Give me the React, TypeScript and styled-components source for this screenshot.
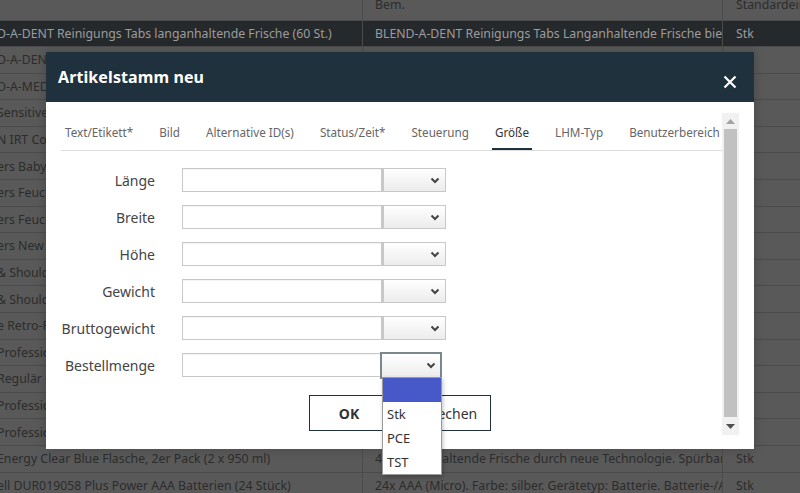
import React from "react";
import styled, { createGlobalStyle } from "styled-components";

const GlobalStyle = createGlobalStyle`
  html, body {
    margin: 0;
    padding: 0;
  }
  body {
    width: 800px;
    height: 493px;
    overflow: hidden;
    background: #595959;
    font-family: "Noto Sans", "Open Sans", sans-serif;
  }
`;

const Page = styled.div`
  position: relative;
  width: 800px;
  height: 493px;
  overflow: hidden;
  background: #595959;
`;

/* list of articles behind the modal, scrolled a little to the right */
const Table = styled.div`
  margin-left: -3px;
  display: flex;
  flex-direction: column;
`;

const Row = styled.div<{ $h: number; $selected?: boolean; $head?: boolean }>`
  display: grid;
  grid-template-columns: 366px 360px 1fr;
  height: ${(p) => p.$h}px;
  box-sizing: border-box;
  border-bottom: 1px solid #4b4b4b;
  background: ${(p) => (p.$selected ? "#25292c" : "transparent")};
  color: ${(p) => (p.$selected ? "#9c9c9c" : "#2c2c2c")};
  font-size: 12.3px;
  align-items: ${(p) => (p.$head ? "start" : "stretch")};
`;

const Cell = styled.div<{ $pad: number; $last?: boolean; $shift?: number }>`
  display: flex;
  align-items: center;
  height: 100%;
  min-width: 0;
  padding-left: ${(p) => p.$pad}px;
  border-right: ${(p) => (p.$last ? "none" : "1px solid #4b4b4b")};
  white-space: nowrap;
  overflow: hidden;
  box-sizing: border-box;
  & > span {
    margin-top: ${(p) => p.$shift ?? 0}px;
  }
`;

/* modal */
const Dialog = styled.div`
  position: absolute;
  left: 46px;
  top: 52px;
  width: 708px;
  height: 397px;
  background: #fff;
  display: flex;
  flex-direction: column;
  box-shadow: 0 0 10px rgba(0, 0, 0, 0.2);
`;

const DialogHeader = styled.div`
  height: 50px;
  flex-shrink: 0;
  background: #1f313d;
  display: flex;
  align-items: center;
  justify-content: space-between;
  padding: 0 17px 0 12px;
`;

const Title = styled.h2`
  margin: 0;
  color: #fff;
  font-size: 16px;
  font-weight: 700;
  letter-spacing: 0.1px;
`;

const CloseButton = styled.button`
  border: none;
  background: none;
  padding: 0;
  margin-top: 10px;
  width: 14px;
  height: 14px;
  display: flex;
  cursor: pointer;
`;

const DialogBody = styled.div`
  flex: 1;
  display: flex;
  padding: 11px 15px 14px 15px;
`;

const Content = styled.div`
  flex: 1;
  min-width: 0;
  display: flex;
  flex-direction: column;
`;

const Tabs = styled.div`
  display: flex;
  height: 37px;
  border-bottom: 1px solid #dcdcdc;
  padding-left: 1px;
  overflow: hidden;
`;

const Tab = styled.div<{ $active?: boolean }>`
  display: flex;
  align-items: center;
  flex-shrink: 0;
  white-space: nowrap;
  padding: 0 3px;
  margin-right: 20px;
  font-size: 11.7px;
  color: ${(p) => (p.$active ? "#333" : "#666")};
  box-shadow: ${(p) => (p.$active ? "inset 0 -2px 0 #1f313d" : "none")};
`;

const Form = styled.div`
  display: flex;
  flex-direction: column;
  gap: 13px;
  margin-top: 17px;
`;

const FormRow = styled.div`
  display: flex;
  align-items: center;
  height: 24px;
`;

const Label = styled.label`
  width: 94px;
  margin-right: 27px;
  text-align: right;
  font-size: 14px;
  color: #444;
`;

const TextInput = styled.div`
  width: 200px;
  height: 24px;
  box-sizing: border-box;
  border: 1px solid #c8c8c8;
  box-shadow: inset 0 1px 1px rgba(0, 0, 0, 0.05);
  background: #fff;
`;

const Select = styled.div<{ $open?: boolean }>`
  position: relative;
  box-sizing: border-box;
  width: ${(p) => (p.$open ? 62 : 64)}px;
  height: ${(p) => (p.$open ? 27 : 24)}px;
  margin-left: ${(p) => (p.$open ? -2 : 0)}px;
  margin-top: ${(p) => (p.$open ? 1 : 0)}px;
  border: ${(p) => (p.$open ? "2px solid #7b868d" : "1px solid #c8c8c8")};
  border-left-width: 2px;
  background: linear-gradient(#fff, #ececec);
  display: flex;
  align-items: center;
  justify-content: flex-end;
  padding-right: ${(p) => (p.$open ? 4 : 5)}px;
`;

const OptionList = styled.ul`
  position: absolute;
  top: 100%;
  left: 0;
  width: 60px;
  box-sizing: border-box;
  margin: 0;
  padding: 0;
  list-style: none;
  background: #fff;
  border: 1px solid #9a9a9a;
  box-shadow: 1px 2px 4px rgba(0, 0, 0, 0.25);
  z-index: 2;
`;

const Option = styled.li<{ $highlight?: boolean }>`
  height: 24px;
  line-height: 24px;
  padding-left: 4px;
  font-size: 13px;
  color: #333;
  background: ${(p) => (p.$highlight ? "#4759c8" : "#fff")};
`;

const Buttons = styled.div`
  display: flex;
  gap: 3px;
  margin-top: 18px;
  margin-left: 248px;
`;

const Button = styled.button<{ $primary?: boolean; $w: number }>`
  width: ${(p) => p.$w}px;
  height: 36px;
  border: 1px solid #1f313d;
  background: #fff;
  font-family: inherit;
  font-size: 14px;
  font-weight: ${(p) => (p.$primary ? 700 : 400)};
  color: #333;
`;

const Scrollbar = styled.div`
  width: 17px;
  background: #f1f1f1;
  display: flex;
  flex-direction: column;
  align-items: center;
`;

const ArrowBox = styled.div<{ $h: number }>`
  height: ${(p) => p.$h}px;
  display: flex;
  align-items: center;
  justify-content: center;
`;

const Thumb = styled.div`
  width: 13px;
  flex: 1;
  background: #c1c1c1;
`;

const Chevron = () => (
  <svg width="10" height="7" viewBox="0 0 10 7">
    <path d="M1.5 1.5 L5 5 L8.5 1.5" fill="none" stroke="#444" strokeWidth="2" />
  </svg>
);

const rows: [string, string][] = [
  ["D-A-DENT Reinigungs Tabs langanhaltende Frische (60 St.)", "BLEND-A-DENT Reinigungs Tabs Langanhaltende Frische bietet"],
  ["D-A-DENT Reinigungs Tabs extra frisch (54 St.)", "BLEND-A-DENT Reinigungs Tabs extra frisch"],
  ["D-A-MED Zahnpasta Classic (75 ml)", "BLEND-A-MED Zahnpasta Classic"],
  [" Sensitive Zahnpasta (75 ml)", "Sensitive Zahnpasta"],
  ["N IRT Comfort Thermometer", "Ohrthermometer"],
  ["ers Baby Dry Windeln Gr. 4", "Pampers Baby Dry"],
  ["ers Feuchte Tücher Sensitive", "Pampers Feuchte Tücher"],
  ["ers Feuchte Tücher Fresh Clean", "Pampers Feuchte Tücher"],
  ["ers New Baby Windeln Gr. 1", "Pampers New Baby"],
  ["& Shoulders Anti-Schuppen Shampoo", "Head & Shoulders Shampoo"],
  ["& Shoulders Classic Clean", "Head & Shoulders Shampoo"],
  ["e Retro-Rasierer", "Retro-Rasierer"],
  [" Professional Haarspray", "Professional Haarspray"],
  ["Regulär Colorwaschmittel", "Colorwaschmittel"],
  ["Professional Zahnbürste", "Professional Zahnbürste"],
  ["Professional Aufsteckbürsten", "Professional Aufsteckbürsten"],
  [" Energy Clear Blue Flasche, 2er Pack (2 x 950 ml)", "4x Langanhaltende Frische durch neue Technologie. Spürbar weicher"],
  ["ell DUR019058 Plus Power AAA Batterien (24 Stück)", "24x AAA (Micro). Farbe: silber. Gerätetyp: Batterie. Batterie-/Akkutyp"],
];

const tabs = ["Text/Etikett*", "Bild", "Alternative ID(s)", "Status/Zeit*", "Steuerung", "Größe", "LHM-Typ", "Benutzerbereich"];
const fields = ["Länge", "Breite", "Höhe", "Gewicht", "Bruttogewicht", "Bestellmenge"];

export default function App() {
  return (
    <Page>
      <GlobalStyle />
      <Table>
        <Row $h={21} $head>
          <Cell $pad={12} $shift={-12}>
            <span></span>
          </Cell>
          <Cell $pad={12} $shift={-12}>
            <span>Bem.</span>
          </Cell>
          <Cell $pad={13} $shift={-12} $last>
            <span>Standardeinheit</span>
          </Cell>
        </Row>
        {rows.map(([name, note], i) => (
          <Row key={i} $h={i === 0 ? 26 : 26.6} $selected={i === 0}>
            <Cell $pad={0}>
              <span>{name}</span>
            </Cell>
            <Cell $pad={12}>
              <span>{note}</span>
            </Cell>
            <Cell $pad={13} $last>
              <span>Stk</span>
            </Cell>
          </Row>
        ))}
      </Table>

      <Dialog>
        <DialogHeader>
          <Title>Artikelstamm neu</Title>
          <CloseButton aria-label="Schließen">
            <svg width="14" height="14" viewBox="0 0 14 14">
              <path d="M1.5 1.5 L12.5 12.5 M12.5 1.5 L1.5 12.5" stroke="#fff" strokeWidth="2.2" />
            </svg>
          </CloseButton>
        </DialogHeader>
        <DialogBody>
          <Content>
            <Tabs>
              {tabs.map((t) => (
                <Tab key={t} $active={t === "Größe"}>
                  {t}
                </Tab>
              ))}
            </Tabs>
            <Form>
              {fields.map((f, i) => {
                const open = i === fields.length - 1;
                return (
                  <FormRow key={f}>
                    <Label>{f}</Label>
                    <TextInput />
                    <Select $open={open}>
                      <Chevron />
                      {open && (
                        <OptionList>
                          <Option $highlight>&nbsp;</Option>
                          <Option>Stk</Option>
                          <Option>PCE</Option>
                          <Option>TST</Option>
                        </OptionList>
                      )}
                    </Select>
                  </FormRow>
                );
              })}
            </Form>
            <Buttons>
              <Button $primary $w={80}>
                OK
              </Button>
              <Button $w={99}>Abbrechen</Button>
            </Buttons>
          </Content>
          <Scrollbar>
            <ArrowBox $h={16}>
              <svg width="9" height="5" viewBox="0 0 9 5">
                <path d="M0 5 L4.5 0 L9 5 Z" fill="#a3a3a3" />
              </svg>
            </ArrowBox>
            <Thumb />
            <ArrowBox $h={18}>
              <svg width="9" height="5" viewBox="0 0 9 5">
                <path d="M0 0 L9 0 L4.5 5 Z" fill="#505050" />
              </svg>
            </ArrowBox>
          </Scrollbar>
        </DialogBody>
      </Dialog>
    </Page>
  );
}
